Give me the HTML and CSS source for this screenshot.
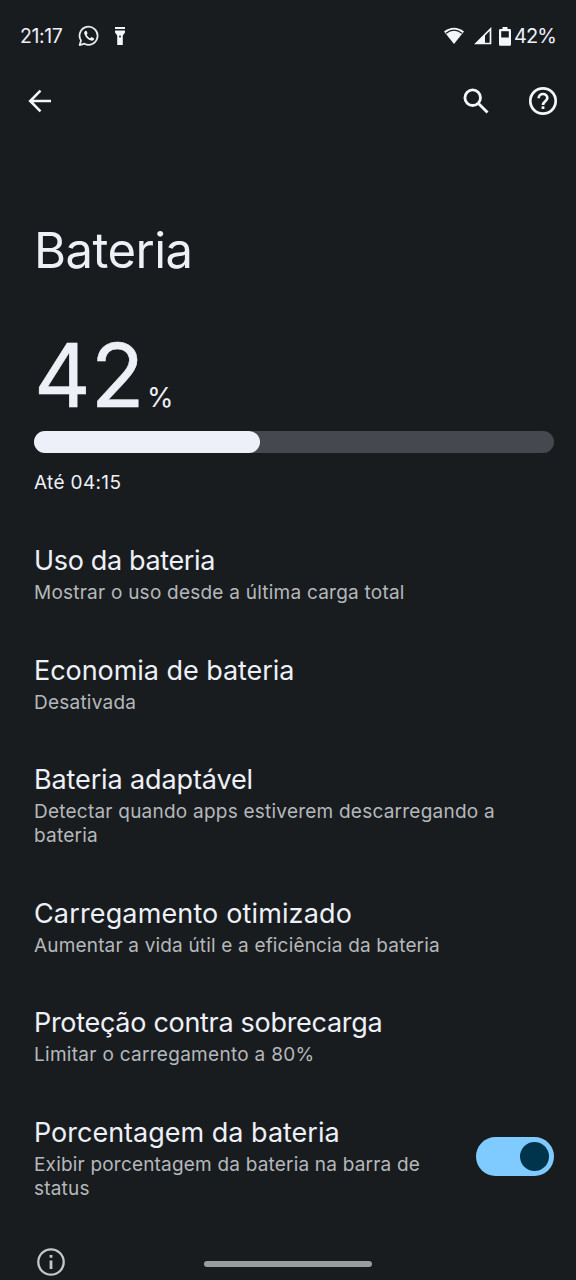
FILE: index.html
```html
<!DOCTYPE html>
<html lang="pt-BR">
<head>
<meta charset="utf-8">
<title>Bateria</title>
<link rel="stylesheet" href="styles.css">
</head>
<body>
<div class="screen">
  <header class="status">
    <span class="clock">21:17</span>
    <svg class="whatsapp" width="22" height="22" viewBox="0 0 22 22" fill="none" stroke="#e8ecee" stroke-width="1.8"><path d="M1.700 20.100 3 15.600A9 9 0 1 1 6.400 18.700Z" stroke-linejoin="round"/><path d="M7.600 5.800c-1.500.6-1.800 2.200-.8 4.200 1.300 2.800 3.500 4.700 6.100 5.500 1.700.5 3.100-.3 3.300-2.100l-2.600-1.400-1.300 1.300c-1.800-.8-3-2-3.700-3.600l1-1.300-1-2.500Z" fill="#f4f6f8" stroke="none"/></svg>
    <svg class="torch" width="12" height="20" viewBox="0 0 12 20" fill="#f4f6f8"><path d="M1 1h10v2H1zM1 4.500h10v2L8.800 9.500V19H3.200V9.500L1 6.500z"/><circle cx="6" cy="10.500" r="1" fill="#191c1f"/></svg>
    <span class="spacer"></span>
    <svg class="wifi" width="22" height="18" viewBox="0 0 22 18"><path d="M1 4.500Q11-3 21 4.500L11 17Z" fill="#f4f6f8"/><path d="M3 6.200Q11 .2 19 6.200" fill="none" stroke="#191c1f" stroke-width="1.200"/></svg>
    <svg class="signal" width="18" height="18" viewBox="0 0 18 18"><path d="M2 16.500 16.500 2v14.500Z" fill="none" stroke="#f4f6f8" stroke-width="1.700"/><path d="M1 17 11 7v10Z" fill="#f4f6f8"/></svg>
    <svg class="cell" width="12" height="19" viewBox="0 0 12 19"><path d="M3.500 0h5v2h2.300q1.200 0 1.200 1.200v14.300q0 1.200-1.200 1.200H1.200Q0 18.700 0 17.500V3.200Q0 2 1.200 2h2.300z" fill="#f4f6f8"/><path d="M2.200 4.200h7.600v6.300H2.200z" fill="#191c1f"/></svg>
    <span class="level">42%</span>
  </header>
  <nav class="toolbar">
    <svg class="back" width="24" height="24" viewBox="0 0 24 24" fill="none" stroke="#f4f6f8" stroke-width="2.600"><path d="M23 12H2.500M12.500 1.700 2.200 12l10.300 10.300"/></svg>
    <span class="spacer"></span>
    <svg class="search" width="26" height="26" viewBox="0 0 26 26" fill="none" stroke="#f4f6f8" stroke-width="2.800"><circle cx="9.700" cy="9.700" r="7.800"/><path d="m15.500 15.500 9 9"/></svg>
    <svg width="30" height="30" viewBox="0 0 30 30" fill="none" stroke="#f4f6f8" stroke-width="2.700"><circle cx="15" cy="15" r="12.700"/><path d="M10.700 12.200c0-2.600 1.900-4.200 4.300-4.200s4.300 1.700 4.300 4c0 3-4.300 3.400-4.300 6.900"/><path d="M13.600 20.300h2.800V23h-2.800z" fill="#f4f6f8" stroke="none"/></svg>
  </nav>
  <h1 class="heading">Bateria</h1>
  <section class="charge">
    <div class="reading"><span class="number">42</span><span class="unit">%</span></div>
    <div class="meter"><div class="fill"></div></div>
    <div class="until">Até 04:15</div>
  </section>
  <main class="list">
    <div class="item"><div class="title t-usage">Uso da bateria</div><div class="summary">Mostrar o uso desde a última carga total</div></div>
    <div class="item"><div class="title t-saver">Economia de bateria</div><div class="summary">Desativada</div></div>
    <div class="item"><div class="title t-adaptive">Bateria adaptável</div><div class="summary">Detectar quando apps estiverem descarregando a<br>bateria</div></div>
    <div class="item"><div class="title t-charging">Carregamento otimizado</div><div class="summary s-charging">Aumentar a vida útil e a eficiência da bateria</div></div>
    <div class="item"><div class="title t-protect">Proteção contra sobrecarga</div><div class="summary s-protect">Limitar o carregamento a 80%</div></div>
    <div class="item with-switch"><div><div class="title">Porcentagem da bateria</div><div class="summary s-percent">Exibir porcentagem da bateria na barra de<br>status</div></div><div class="switch"><div class="thumb"></div></div></div>
  </main>
  <footer class="footer">
    <svg width="28" height="28" viewBox="0 0 28 28" fill="none" stroke="#c4c7ca" stroke-width="2.300"><circle cx="14" cy="14" r="12.700"/><path d="M14 12.500V21M14 7v2.800" stroke-width="2.800"/></svg>
    <div class="handle"></div>
  </footer>
</div>
</body>
</html>
```
FILE: styles.css
```css
* { box-sizing: border-box; }
body { margin: 0; background: #191c1f; }
.screen {
  width: 576px; height: 1280px; overflow: hidden;
  background: #191c1f; color: #eef0f7;
  font-family: Inter, "Open Sans", sans-serif;
  white-space: nowrap;
}
.spacer { flex: 1; }
.status { height: 72px; padding: 0 20px; display: flex; align-items: center; }
.clock { width: 42px; font-size: 19.500px; letter-spacing: -0.400px; }
.whatsapp { margin-left: 16px; }
.torch { margin-left: 14px; }
.signal { margin-left: 9px; }
.cell { margin-left: 7px; }
.level { width: 42px; margin-left: 3px; font-size: 20px; letter-spacing: -0.900px; }
.toolbar { height: 58px; padding: 0 18px 0 28px; display: flex; align-items: center; }
.search { margin-right: 39px; }
.heading { margin: 89px 0 0 34px; height: 64px; line-height: 64px; font-size: 49px; font-weight: 400; letter-spacing: -0.550px; }
.charge { padding: 40px 22px 0 34px; }
.reading { height: 108px; display: flex; align-items: baseline; line-height: 105px; }
.number { width: 113px; font-size: 88px; -webkit-text-stroke: 0.500px #eef0f7; }
.unit { font-size: 27px; }
.meter { height: 22px; border-radius: 11px; background: #45484f; }
.fill { width: 226px; height: 22px; border-radius: 11px; background: #eef0f9; }
.until { margin-top: 18px; height: 24px; line-height: 24px; font-size: 19px; letter-spacing: 0.350px; }
.list { padding: 50px 22px 0 34px; }
.item { padding-bottom: 49.600px; }
.item:last-child { padding-bottom: 46.600px; }
.title { height: 36px; line-height: 31px; font-size: 27px; }
.t-usage { letter-spacing: -0.350px; }
.t-saver { letter-spacing: -0.050px; }
.t-adaptive { letter-spacing: -0.120px; }
.t-charging { letter-spacing: 0.140px; }
.t-protect { letter-spacing: -0.300px; }
.summary { line-height: 24px; font-size: 19px; letter-spacing: 0.230px; color: #b5b8bb; }
.s-charging { letter-spacing: 0.170px; }
.s-protect { letter-spacing: 0.290px; }
.s-percent { letter-spacing: 0.190px; }
.with-switch { display: flex; justify-content: space-between; }
.switch { width: 78px; height: 39px; margin-top: 20px; padding: 5px; border-radius: 20px; background: #7fcaff; display: flex; justify-content: flex-end; }
.thumb { width: 29px; height: 29px; border-radius: 50%; background: #00344c; }
.footer { display: flex; padding-left: 37px; }
.handle { width: 168px; height: 6px; margin: 13px 0 0 139px; border-radius: 3px; background: #9a9d9f; }
```
